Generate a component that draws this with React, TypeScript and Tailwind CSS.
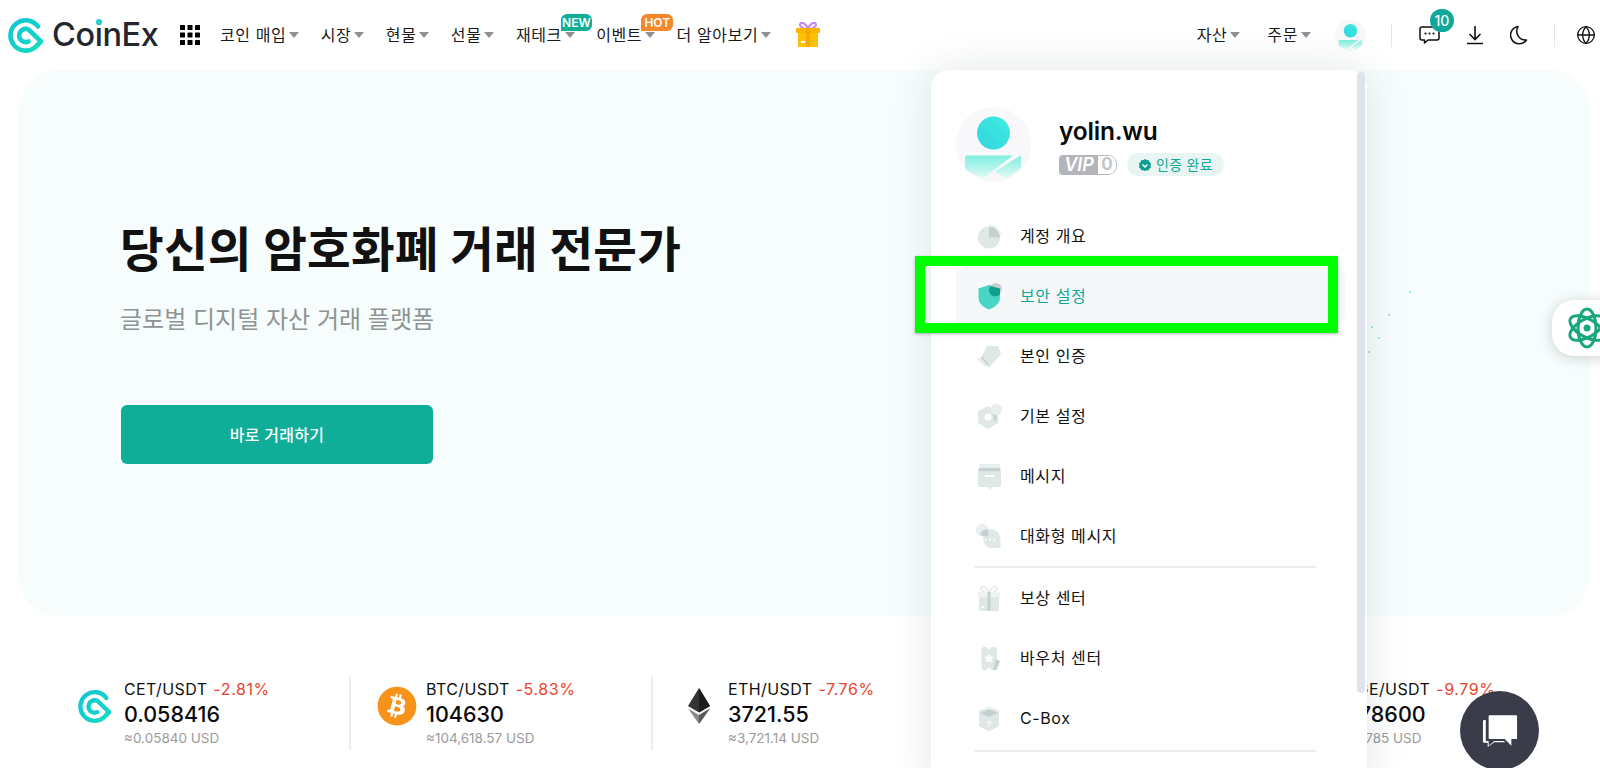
import React from "react";
import { Globe } from "lucide-react";
import { FaBitcoin } from "react-icons/fa";

function Caret() {
  return <span className="ml-[3px] inline-block h-0 w-0 border-x-[5px] border-t-[6px] border-x-transparent border-t-[#8f9094]" />;
}

function NavItem({ label, badge }: { label: string; badge?: "NEW" | "HOT" }) {
  return (
    <div className="relative flex items-center text-[16px] leading-[24px] tracking-[0.6px] text-[#1a1a1a]">
      <span>{label}</span>
      <Caret />
      {badge === "NEW" && (
        <span className="absolute left-[45px] top-[-9px] flex h-[17px] w-[31px] items-center justify-center rounded-[6px] rounded-bl-none bg-[#10ae96] text-[12px] font-semibold tracking-normal text-white">NEW</span>
      )}
      {badge === "HOT" && (
        <span className="absolute left-[45px] top-[-9px] flex h-[17px] w-[32px] items-center justify-center rounded-[6px] rounded-bl-none bg-[#f5882a] text-[12px] font-semibold tracking-normal text-white">HOT</span>
      )}
    </div>
  );
}

function CetLogo({ size }: { size: number }) {
  const id = `cet${size}`;
  return (
    <svg width={size} height={size} viewBox="0 0 36 36" fill="none">
      <defs>
        <linearGradient id={id} x1="0" y1="0" x2="1" y2="1">
          <stop offset="0" stopColor="#12c4d4" />
          <stop offset="1" stopColor="#16dcc0" />
        </linearGradient>
      </defs>
      <path
        d="M30 9.500A15.200 15.200 0 1 0 27 30.500L33 24.500L20.500 12.500A6.600 6.600 0 1 0 20.500 24.500"
        stroke={`url(#${id})`}
        strokeWidth="4.600"
        strokeLinecap="round"
        strokeLinejoin="round"
      />
    </svg>
  );
}

function Avatar({ size }: { size: number }) {
  const id = `av${size}`;
  return (
    <svg width={size} height={size} viewBox="0 0 75 75">
      <defs>
        <linearGradient id={`${id}a`} x1="0" y1="1" x2="1" y2="0">
          <stop offset="0" stopColor="#2fd5e0" />
          <stop offset="1" stopColor="#41ebdf" />
        </linearGradient>
        <linearGradient id={`${id}b`} x1="0" y1="0" x2="0" y2="1">
          <stop offset="0" stopColor="#7deee0" />
          <stop offset="1" stopColor="#e4faf6" />
        </linearGradient>
      </defs>
      <circle cx="37.500" cy="37.500" r="37.500" fill="#f8f8fb" />
      <circle cx="37.500" cy="26" r="16.500" fill={`url(#${id}a)`} />
      <path d="M11 48.500h46L27 71.500 12 64q-3-1.500-3-4V50.500q0-2 2-2z" fill={`url(#${id}b)`} />
      <path d="M64.500 48.500q.5 1 .5 2V60q0 2-3 3.500L50 71.500 39 64.500z" fill={`url(#${id}b)`} />
    </svg>
  );
}

const G = "#dfe8e7";
const D = "#c5d1d0";

const icons: Record<string, React.ReactNode> = {
  pie: (
    <>
      <circle cx="14" cy="15.500" r="11" fill={G} />
      <path d="M14 4.500v11h11A11 11 0 0 0 14 4.500z" fill={D} />
      <path d="M14 2.500a12.500 12.500 0 0 1 12.500 11H25A11 11 0 0 0 14 4.500z" fill="#eef3f2" />
    </>
  ),
  shield: (
    <>
      <path d="M3.500 6.500 14 3l11 3.500v9c0 6-5 9.500-11 12-6-2.500-10.500-6-10.500-12z" fill="#48d6c3" />
      <circle cx="21" cy="7" r="6" fill="#c9cfd0" />
      <path d="M15.500 4 25 6.500v5.800a6 6 0 0 1-9.500-8.300z" fill="#12a08e" />
    </>
  ),
  id: (
    <>
      <path d="M12 4H23L26 12 14 26 7 14z" fill={G} />
      <path d="M2 17l5-3 6 8-3 3z" fill="#e9efee" />
      <path d="M7 14l6.500 8.500L12.500 24 6 16z" fill={D} />
    </>
  ),
  gear: (
    <>
      <path d="M13 4l10 5.500v11.500l-10 6-10-6V9.500z" fill={G} />
      <circle cx="13" cy="15" r="3.500" fill="#ffffff" />
      <circle cx="21.500" cy="7.500" r="5.800" fill="#e9efee" />
      <path d="M17 11a5.800 5.800 0 0 0 4.500 2v5l-3 1.500A8 8 0 0 0 17 11z" fill={D} />
    </>
  ),
  mail: (
    <>
      <rect x="4" y="2" width="21" height="6" rx="1" fill="#e9efee" />
      <rect x="3" y="6" width="23" height="19" rx="2" fill={G} />
      <rect x="4" y="6" width="21" height="3" fill={D} />
      <rect x="10" y="13" width="9" height="2" fill="#ffffff" />
      <circle cx="14.500" cy="25" r="2" fill={G} />
    </>
  ),
  chat: (
    <>
      <circle cx="7" cy="8" r="6.500" fill="#e9efee" />
      <path d="M15 7a10.500 10.500 0 0 1 10.500 10.500V26H15A10 10 0 0 1 15 7z" fill={G} />
      <path d="M13.500 13.500a6.500 6.500 0 0 1-8.500-1.500 10 10 0 0 1 8-5z" fill={D} />
      <circle cx="10.500" cy="17.500" r="1.100" fill="#fff" />
      <circle cx="15" cy="17.500" r="1.100" fill="#fff" />
      <circle cx="19.500" cy="17.500" r="1.100" fill="#fff" />
    </>
  ),
  gift: (
    <>
      <path d="M14 9C12 3 8 2 6.500 3.500S7 9 14 9c7 0 9-4 7.500-5.500S16 3 14 9z" fill="none" stroke="#e9efee" strokeWidth="2" />
      <rect x="3" y="8" width="22" height="6" fill="#eef3f2" />
      <rect x="4" y="13" width="20" height="14" rx="2" fill={G} />
      <rect x="12.500" y="8" width="3" height="19" fill={D} />
      <rect x="6" y="22" width="3" height="2" fill="#fff" />
    </>
  ),
  voucher: (
    <>
      <path d="M8.500 3H12a2 2 0 0 0 4 0h3.500Q22 3 22 5.500v18q0 2.500-2.500 2.500H16a2 2 0 0 0-4 0H8.500Q6.500 26 6.500 23.500v-18Q6.500 3 8.500 3z" fill={G} />
      <path d="M14 9.500l1.500 3 3.200.400-2.300 2.300.600 3.200-3-1.500-3 1.500.600-3.200-2.300-2.300 3.200-.400z" fill="#fff" />
      <path d="M21 15l4 2-3.500 9H18z" fill={D} />
    </>
  ),
  box: (
    <>
      <path d="M14 2l10 5v15l-10 5.500L4 22V7z" fill={G} />
      <path d="M14 5l9 4-9 4-9-4z" fill={D} />
      <path d="M5 6.500 14 2l9 4.500-9-1.500z" fill="#eef3f2" />
      <text x="14" y="23" textAnchor="middle" fontSize="8" fontWeight="700" fill="#fff" fontFamily="Inter, sans-serif">?</text>
    </>
  ),
};

function MenuRow({ icon, label, active }: { icon: string; label: string; active?: boolean }) {
  return (
    <div className={`flex h-[60px] items-center gap-[17px] rounded-[12px] pl-[19px] ${active ? "bg-[#f6f7f9] text-[#0fa896]" : "text-[#111]"}`}>
      <svg width="28" height="28" viewBox="0 0 28 28" className="shrink-0">{icons[icon]}</svg>
      <span className="text-[16px] tracking-[0.6px]">{label}</span>
    </div>
  );
}

function Ticker({ icon, pair, change, price, usd, last }: { icon: React.ReactNode; pair: string; change: string; price: string; usd: string; last?: boolean }) {
  return (
    <div className={`flex h-[74px] w-[302px] items-start ${last ? "" : "border-r-2 border-[#eeeeee]"}`}>
      <div className="ml-[26px] mr-[9px] flex h-[60px] w-[40px] shrink-0 items-center justify-center">{icon}</div>
      <div className="flex flex-col">
        <div className="flex items-center gap-[6px] text-[16px] leading-[26px] tracking-[0.4px] text-[#111]">
          <span>{pair}</span>
          <span className="tracking-[0.6px] text-[#e8452c]">{change}</span>
        </div>
        <div className="text-[21.500px] font-medium leading-[24px] text-[#0b0b0b]">{price}</div>
        <div className="text-[13.500px] leading-[24px] text-[#9a9a9a]">{usd}</div>
      </div>
    </div>
  );
}

export default function App() {
  return (
    <div className="relative h-[768px] w-[1600px] overflow-hidden bg-white font-['Inter','Noto_Sans_CJK_KR',sans-serif]">
      {/* Header */}
      <header className="flex h-[70px] items-center">
        <div className="ml-[8px] flex w-[172px] items-center">
          <CetLogo size={36} />
          <span className="ml-[8px] text-[32.500px] font-medium leading-none tracking-[-0.4px] text-[#24262e]">
            Co
            <span className="relative">
              i
              <span className="absolute left-[1px] top-[4px] h-[6px] w-[6px] rounded-full bg-[#22cfd8]" />
            </span>
            nEx
          </span>
        </div>
        <svg width="20" height="20" viewBox="0 0 20 20" className="shrink-0 text-black" fill="currentColor">
          {[0, 7.500, 15].map((x) => [0, 7.500, 15].map((y) => <rect key={`${x}-${y}`} x={x} y={y} width="5" height="5" rx="0.500" />))}
        </svg>
        <nav className="ml-[20px] flex items-center gap-[21.400px]">
          <NavItem label="코인 매입" />
          <NavItem label="시장" />
          <NavItem label="현물" />
          <NavItem label="선물" />
          <NavItem label="재테크" badge="NEW" />
          <NavItem label="이벤트" badge="HOT" />
          <NavItem label="더 알아보기" />
        </nav>
        <svg width="26" height="26" viewBox="0 0 26 26" className="ml-[24px] shrink-0">
          <path d="M13 7C11 1 7 0 5.500 1.500S6 7 13 7c7 0 9-4 7.500-5.500S15 1 13 7z" fill="none" stroke="#c58cf5" strokeWidth="2.200" />
          <rect x="1" y="6" width="24" height="5" rx="1" fill="#ffb400" />
          <rect x="3" y="11" width="20" height="14" fill="#ffc107" />
          <rect x="11" y="6" width="4" height="19" fill="#f5a800" />
          <rect x="6" y="19" width="4" height="2" fill="#fff" />
        </svg>
        <div className="ml-auto flex items-center">
          <NavItem label="자산" />
          <div className="ml-[27px]"><NavItem label="주문" /></div>
          <div className="ml-[24px]"><Avatar size={31} /></div>
          <div className="ml-[25px] h-[23px] w-[1px] bg-[#e5e5e5]" />
          <div className="relative ml-[27px]">
            <svg width="21" height="18" viewBox="0 0 21 18" fill="none" stroke="#111" strokeWidth="1.500" className="block">
              <path d="M3 1h15a2 2 0 0 1 2 2v9a2 2 0 0 1-2 2H9l-3.500 3v-3H3a2 2 0 0 1-2-2V3a2 2 0 0 1 2-2z" strokeLinejoin="round" />
              <circle cx="6.500" cy="7.500" r="1.100" fill="#111" stroke="none" />
              <circle cx="10.500" cy="7.500" r="1.100" fill="#111" stroke="none" />
              <circle cx="14.500" cy="7.500" r="1.100" fill="#111" stroke="none" />
            </svg>
            <span className="absolute left-[11px] top-[-17px] flex h-[23px] w-[24px] items-center justify-center rounded-full bg-[#10a898] text-[14px] font-medium text-white">10</span>
          </div>
          <svg width="20" height="20" viewBox="0 0 20 20" fill="none" stroke="#111" strokeWidth="1.600" className="ml-[25px]">
            <path d="M10 1v13M4.500 9l5.500 5.500L15.500 9M2 18.500h16" />
          </svg>
          <svg width="18" height="20" viewBox="0 0 18 20" fill="none" stroke="#111" strokeWidth="1.500" className="ml-[25px]" strokeLinejoin="round">
            <path d="M8 1.500A8.700 8.700 0 1 0 16.500 15 9 9 0 0 1 8 1.500z" />
          </svg>
          <div className="ml-[26px] h-[23px] w-[1px] bg-[#e5e5e5]" />
          <Globe size={20} strokeWidth={1.6} className="ml-[21px] mr-[4px] text-[#111]" />
        </div>
      </header>

      {/* Hero */}
      <section className="relative ml-[19px] flex h-[546px] w-[1571px] flex-col items-start rounded-[40px] bg-[#f7fdfc] pl-[101px] pt-[150px]">
        <h1 className="text-[47.500px] font-bold leading-[60px] tracking-[0.2px] text-[#111]">당신의 암호화폐 거래 전문가</h1>
        <p className="mt-[22px] text-[24px] leading-[36px] text-[#8e9494]">글로벌 디지털 자산 거래 플랫폼</p>
        <button className="ml-[1px] mt-[67px] h-[59px] w-[312px] rounded-[6px] bg-[#10ae98] text-[16px] font-medium tracking-[0.3px] text-white">바로 거래하기</button>
      </section>

      {/* Ticker strip */}
      <section className="ml-[49px] mt-[60px] flex">
        <Ticker icon={<CetLogo size={34} />} pair="CET/USDT" change="-2.81%" price="0.058416" usd="≈0.05840 USD" />
        <Ticker icon={<FaBitcoin size={40} color="#f7931a" className="rounded-full bg-white" />} pair="BTC/USDT" change="-5.83%" price="104630" usd="≈104,618.57 USD" />
        <Ticker
          icon={
            <svg width="22" height="36" viewBox="0 0 22 36">
              <path d="M11 0 0 18l11 6.500L22 18z" fill="#343434" />
              <path d="M11 0v24.500L22 18z" fill="#1c1c1c" />
              <path d="M0 20.500 11 36l11-15.500-11 6.500z" fill="#8a8a8a" />
              <path d="M11 27v9l11-15.500z" fill="#5a5a5a" />
            </svg>
          }
          pair="ETH/USDT" change="-7.76%" price="3721.55" usd="≈3,721.14 USD"
        />
        <div className="h-[74px] w-[302px]" />
        <Ticker icon={null} pair="DOGE/USDT" change="-9.79%" price="0.178600" usd="≈0.17785 USD" last />
      </section>

      {/* Decorative specks at the hero */}
      <svg className="absolute left-[1368px] top-[285px]" width="70" height="100" fill="#7fdfe6">
        <circle cx="42" cy="7" r="1" />
        <circle cx="21" cy="30" r="1" />
        <circle cx="4" cy="42" r="1" />
        <circle cx="11" cy="53" r="1" />
        <circle cx="1" cy="67" r="1" />
      </svg>

      {/* Account dropdown */}
      <aside className="absolute left-[931px] top-[70px] h-[720px] w-[436px] rounded-t-[18px] bg-white pl-[25px] pr-[22px] pt-[37px] shadow-[0_0_40px_rgba(50,80,90,0.14)]">
        <div className="absolute right-[2px] top-[2px] h-[621px] w-[8px] rounded-full bg-[#dfe3ed]" />
        <div className="flex h-[75px] items-start">
          <Avatar size={75} />
          <div className="ml-[28px] flex flex-col">
            <div className="mt-[6px] text-[24.500px] font-semibold leading-[36px] tracking-[-0.2px] text-[#0b0b0b]">yolin.wu</div>
            <div className="mt-[4px] flex items-center">
              <div className="flex h-[20px] w-[58px] items-stretch overflow-hidden rounded-[3px] rounded-r-[9px] border border-[#b4b5ba]">
                <span className="flex w-[38px] items-center justify-center bg-[#b4b5ba] text-[18px] font-semibold italic leading-none text-white">VIP</span>
                <span className="flex flex-1 items-center justify-center bg-white text-[17px] font-bold leading-none text-[#c4c5c9]">0</span>
              </div>
              <div className="ml-[10px] flex h-[23px] items-center gap-[5px] rounded-full bg-[#e9f5f3] pl-[12px] pr-[11px]">
                <svg width="12" height="12" viewBox="0 0 12 12">
                  <path d="M6 0l1.700 1.100 2 .100.800 1.800 1.500 1.400-.500 2 .500 2-1.500 1-.800 1.800-2 .100L6 12l-1.700-.700-2-.100-.800-1.800L0 8.400l.500-2L0 4.400l1.500-1.400.800-1.800 2-.100z" fill="#0f9e8e" />
                  <path d="M3.500 5.500 6 8l2.500-2.500" fill="none" stroke="#fff" strokeWidth="1.500" />
                </svg>
                <span className="text-[14px] leading-none tracking-[0.3px] text-[#10a898]">인증 완료</span>
              </div>
            </div>
          </div>
        </div>
        <div className="mt-[24px] flex flex-col">
          <MenuRow icon="pie" label="계정 개요" />
          <MenuRow icon="shield" label="보안 설정" active />
          <MenuRow icon="id" label="본인 인증" />
          <MenuRow icon="gear" label="기본 설정" />
          <MenuRow icon="mail" label="메시지" />
          <MenuRow icon="chat" label="대화형 메시지" />
          <div className="ml-[19px] mr-[29px] h-[2px] bg-[#ececec]" />
          <MenuRow icon="gift" label="보상 센터" />
          <MenuRow icon="voucher" label="바우처 센터" />
          <MenuRow icon="box" label="C-Box" />
          <div className="ml-[19px] mr-[29px] mt-[2px] h-[2px] bg-[#ececec]" />
        </div>
      </aside>

      {/* Green highlight annotation */}
      <div className="absolute left-[915px] top-[256px] h-[77px] w-[423px] border-[10px] border-[#00ff00] shadow-[0_1px_3px_rgba(0,0,0,0.3)]" />

      {/* Floating widgets */}
      <div className="absolute left-[1552px] top-[300px] flex h-[56px] w-[60px] items-center rounded-l-[22px] bg-white pl-[14px] shadow-[0_2px_14px_rgba(0,0,0,0.18)]">
        <svg width="42" height="42" viewBox="0 0 42 42" fill="none" stroke="#17a67e" strokeWidth="3" className="shrink-0">
          <ellipse cx="21" cy="21" rx="19" ry="9" transform="rotate(30 21 21)" />
          <ellipse cx="21" cy="21" rx="19" ry="9" transform="rotate(90 21 21)" />
          <ellipse cx="21" cy="21" rx="19" ry="9" transform="rotate(150 21 21)" />
          <circle cx="21" cy="21" r="3.500" fill="#17a67e" stroke="none" />
        </svg>
      </div>
      <div className="absolute left-[1460px] top-[691px] flex h-[79px] w-[79px] items-center justify-center rounded-full bg-[#3a3d49]">
        <svg width="36" height="33" viewBox="0 0 38 34" fill="#fff">
          <path d="M8 1h28a1 1 0 0 1 1 1v24h-6v7l-7-7H8a1 1 0 0 1-1-1V2a1 1 0 0 1 1-1z" />
          <path d="M4 6v22h3v5l6-5h10l1.500 1.500H13L6 34.500V30H2.500A1.500 1.500 0 0 1 1 28.500V7.500A1.500 1.500 0 0 1 2.500 6z" />
        </svg>
      </div>
    </div>
  );
}
